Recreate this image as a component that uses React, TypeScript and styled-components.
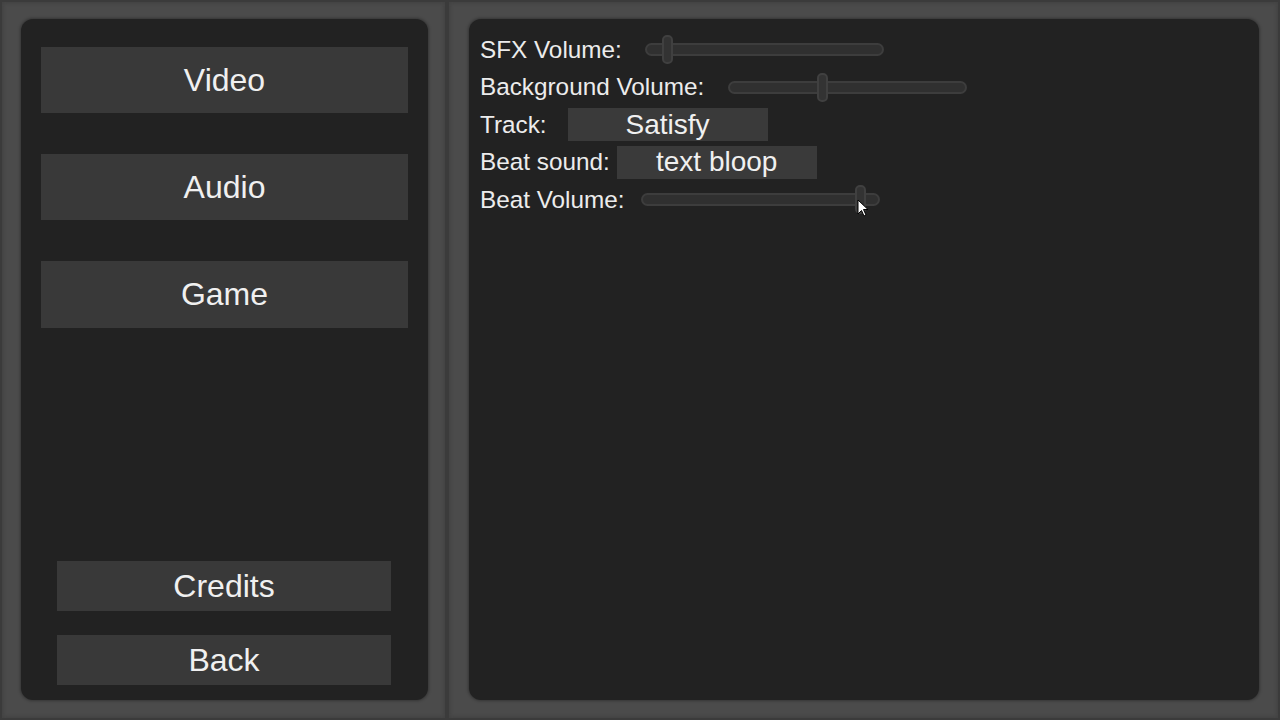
import React from "react";
import { createGlobalStyle, styled } from "styled-components";

const GlobalStyle = createGlobalStyle`
  html, body {
    margin: 0;
    padding: 0;
    background: #4b4b4b;
    font-family: "Liberation Sans", Arial, sans-serif;
    color: #efefef;
  }
`;

const Screen = styled.div`
  width: 1280px;
  height: 720px;
  display: flex;
  overflow: hidden;
  position: relative;
  background: #4b4b4b;
`;

const Frame = styled.div<{ $width: number; $pad: string }>`
  width: ${(p) => p.$width}px;
  height: 100%;
  box-sizing: border-box;
  padding: ${(p) => p.$pad};
  display: flex;
  box-shadow: inset 0 0 0 2px #3b3b3b, inset 0 0 3px 4px #444;
`;

const Panel = styled.div`
  flex: 1;
  background: #222222;
  border-radius: 12px;
  box-shadow: 0 0 3px 1px rgba(0, 0, 0, 0.3);
  display: flex;
  flex-direction: column;
`;

const MenuPanel = styled(Panel)`
  padding: 28px 20px 15px;
`;

const TabList = styled.div`
  display: flex;
  flex-direction: column;
  gap: 41px;
  flex: 1;
`;

const BottomList = styled.div`
  display: flex;
  flex-direction: column;
  gap: 24px;
  padding: 0 17px 0 16px;
`;

const MenuButton = styled.button<{ $height: number }>`
  height: ${(p) => p.$height}px;
  border: none;
  background: #393939;
  color: #f0f0f0;
  font-family: "Liberation Sans", Arial, sans-serif;
  font-size: 32px;
  padding: 0;
  display: flex;
  align-items: center;
  justify-content: center;
`;

const SettingsPanel = styled(Panel)`
  padding: 14px 11px;
  gap: 4.5px;
`;

const Row = styled.div`
  height: 33px;
  display: flex;
  align-items: center;
`;

const Label = styled.span`
  font-size: 24.3px;
  white-space: nowrap;
  color: #ececec;
`;

const Select = styled.div<{ $offset: number }>`
  margin-left: ${(p) => p.$offset}px;
  width: 200px;
  height: 33px;
  background: #3a3a3a;
  font-size: 28px;
  display: flex;
  align-items: center;
  justify-content: center;
  color: #f0f0f0;
`;

const SliderTrack = styled.div<{ $offset: number }>`
  margin-left: ${(p) => p.$offset}px;
  width: 239px;
  height: 13px;
  box-sizing: border-box;
  border-radius: 7px;
  background: #303030;
  border: 2px solid #3d3d3d;
  position: relative;
`;

const SliderThumb = styled.div`
  position: absolute;
  top: -10px;
  width: 11px;
  height: 29px;
  margin-left: -5px;
  box-sizing: border-box;
  border-radius: 5px;
  background: #333333;
  border: 2px solid #404040;
`;

const Cursor = styled.svg`
  position: absolute;
  left: 857px;
  top: 199px;
`;

const Slider = ({ offset, value }: { offset: number; value: number }) => (
  <SliderTrack $offset={offset}>
    <SliderThumb style={{ left: `${value * 100}%` }} />
  </SliderTrack>
);

export default function App() {
  return (
    <Screen>
      <GlobalStyle />
      <Frame $width={447} $pad="19px 19px 20px 21px">
        <MenuPanel>
          <TabList>
            <MenuButton $height={66}>Video</MenuButton>
            <MenuButton $height={66}>Audio</MenuButton>
            <MenuButton $height={67}>Game</MenuButton>
          </TabList>
          <BottomList>
            <MenuButton $height={50}>Credits</MenuButton>
            <MenuButton $height={50}>Back</MenuButton>
          </BottomList>
        </MenuPanel>
      </Frame>
      <Frame $width={833} $pad="19px 21px 20px 22px">
        <SettingsPanel>
          <Row>
            <Label>SFX Volume:</Label>
            <Slider offset={23} value={0.085} />
          </Row>
          <Row>
            <Label>Background Volume:</Label>
            <Slider offset={24} value={0.39} />
          </Row>
          <Row>
            <Label>Track:</Label>
            <Select $offset={21}>Satisfy</Select>
          </Row>
          <Row>
            <Label>Beat sound:</Label>
            <Select $offset={7}>text bloop</Select>
          </Row>
          <Row>
            <Label>Beat Volume:</Label>
            <Slider offset={16} value={0.925} />
          </Row>
        </SettingsPanel>
      </Frame>
      <Cursor width="12" height="18" viewBox="0 0 12 18">
        <path
          d="M1 1 L1 15 L4.5 11.5 L7 17 L9 16 L6.5 10.5 L11 10.5 Z"
          fill="#fff"
          stroke="#000"
          strokeWidth="1"
          strokeLinejoin="round"
        />
      </Cursor>
    </Screen>
  );
}
